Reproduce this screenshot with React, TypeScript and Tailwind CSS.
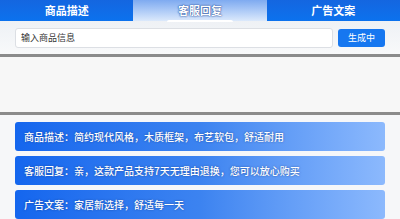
export default function App() {
  const tabs = ['商品描述', '客服回复', '广告文案']
  const results = [
    '商品描述：简约现代风格，木质框架，布艺软包，舒适耐用',
    '客服回复：亲，这款产品支持7天无理由退换，您可以放心购买',
    '广告文案：家居新选择，舒适每一天',
  ]

  return (
    <div
      className="w-[400px] h-[219px] overflow-hidden bg-[#f6f7f9]"
      style={{ fontFamily: '"Noto Sans CJK SC", "Noto Sans", sans-serif' }}
    >
      {/* Tabs */}
      <div className="grid grid-cols-3 h-[21px]">
        {tabs.map((t, i) =>
          i === 1 ? (
            <div
              key={t}
              className="relative flex items-center justify-center bg-gradient-to-b from-[#7eaaf0] to-[#dce9fb] text-white text-[11px] font-semibold [text-shadow:0_0_2px_rgba(30,70,150,1),0_0_1px_rgba(30,70,150,1)]"
            >
              {t}
              <div className="absolute -bottom-[1px] left-[34px] right-[34px] h-[2px] rounded-t bg-white" />
            </div>
          ) : (
            <div
              key={t}
              className="flex items-center justify-center bg-gradient-to-b from-[#1466e0] to-[#0b72ee] text-white text-[11px] font-semibold"
            >
              {t}
            </div>
          )
        )}
      </div>

      {/* Input row */}
      <div className="flex items-start gap-[5px] px-[15px] pt-[7px] h-[33px] bg-gradient-to-b from-[#eef1f5] to-[#f8f9fa]">
        <div className="flex-1 h-[20px] flex items-center px-[5px] bg-white border border-[#dcdfe4] rounded-[3px] text-[9px] text-[#333]">
          输入商品信息
        </div>
        <div className="mt-[1px] w-[47px] h-[18px] flex items-center justify-center rounded-[3px] bg-[#1677f0] text-white text-[9px]">
          生成中
        </div>
      </div>

      {/* Empty area */}
      <div className="h-[3px] bg-[#8b8b8b]" />
      <div className="h-[55px] bg-[#f7f7f7]" />
      <div className="h-[3px] bg-[#8b8b8b]" />

      {/* Results */}
      <div className="flex flex-col gap-[5px] px-[15px] pt-[7px]">
        {results.map((r) => (
          <div
            key={r}
            className="h-[29px] shrink-0 flex items-center pl-[9px] rounded-[3px] bg-gradient-to-r from-[#1466ee] via-[#3c83f0] to-[#8cb9fd] text-white text-[10px] font-medium [text-shadow:0_0_2px_rgba(20,50,120,0.7)]"
          >
            {r}
          </div>
        ))}
      </div>
    </div>
  )
}
